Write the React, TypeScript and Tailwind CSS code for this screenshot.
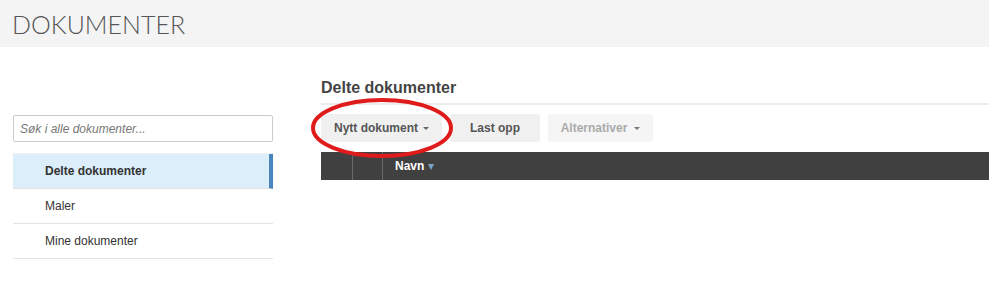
import React from "react";

const arial = { fontFamily: '"Liberation Sans", Arial, sans-serif' };

export default function App() {
  return (
    <div className="w-[989px] h-[287px] bg-white overflow-hidden relative" style={arial}>
      <div className="h-[47px] bg-[#f4f4f4] flex items-center pl-[12px]">
        <h1
          className="text-[25px] font-light text-[#555] leading-none mt-[1px]"
          style={{ fontFamily: 'Lato, "Open Sans", sans-serif', fontWeight: 300 }}
        >
          DOKUMENTER
        </h1>
      </div>
      <div className="flex pl-[13px] pr-0">
        <aside className="w-[260px] pt-[68px] shrink-0">
          <div className="h-[27px] border border-[#ccc] rounded-[2px] flex items-center pl-[6px] text-[12px] italic text-[#777]">
            Søk i alle dokumenter...
          </div>
          <ul className="mt-[11px] border-t border-[#eee]">
            <li className="h-[35px] bg-[#dbeefa] border-r-4 border-[#4a86c0] flex items-center pl-[32px] text-[12px] font-bold text-[#333] border-b border-b-[#e3e3e3]">
              Delte dokumenter
            </li>
            <li className="h-[35px] flex items-center pl-[32px] text-[12px] text-[#333] border-b border-[#e3e3e3]">
              Maler
            </li>
            <li className="h-[35px] flex items-center pl-[32px] text-[12px] text-[#333] border-b border-[#e3e3e3]">
              Mine dokumenter
            </li>
          </ul>
        </aside>
        <main className="flex-1 ml-[48px] pt-[31px]">
          <h2 className="text-[16px] font-bold text-[#444] leading-[20px] pb-[5px] border-b-2 border-[#ececec]">
            Delte dokumenter
          </h2>
          <div className="flex gap-[8px] mt-[9px] text-[12px] font-bold">
            <button className="h-[28px] w-[121px] bg-[#f0f0f0] rounded-[2px] text-[#555] flex items-center justify-center gap-[5px]">
              Nytt dokument
              <span className="border-x-[3px] border-x-transparent border-t-[3px] border-t-[#666] mt-[1px]" />
            </button>
            <button className="h-[28px] w-[90px] bg-[#f0f0f0] rounded-[2px] text-[#555] flex items-center justify-center">
              Last opp
            </button>
            <button className="h-[28px] w-[105px] bg-[#f5f5f5] rounded-[2px] text-[#aaa] flex items-center justify-center gap-[7px]">
              Alternativer
              <span className="border-x-[3px] border-x-transparent border-t-[3px] border-t-[#777] mt-[1px]" />
            </button>
          </div>
          <div className="mt-[10px] h-[28px] bg-[#404040] flex text-[12px] font-bold text-white">
            <div className="w-[32px] border-r border-[#6a6a6a]" />
            <div className="w-[30px] border-r border-[#6a6a6a]" />
            <div className="flex items-center pl-[12px] gap-[4px]">
              Navn
              <span className="border-x-[3px] border-x-transparent border-t-[6px] border-t-[#7aa7c9] mt-[1px]" />
            </div>
          </div>
        </main>
      </div>
      <svg className="absolute left-0 top-0 pointer-events-none" width="989" height="287">
        <ellipse cx="382" cy="128" rx="69" ry="28" fill="none" stroke="#e01b1b" strokeWidth="4" />
      </svg>
    </div>
  );
}
